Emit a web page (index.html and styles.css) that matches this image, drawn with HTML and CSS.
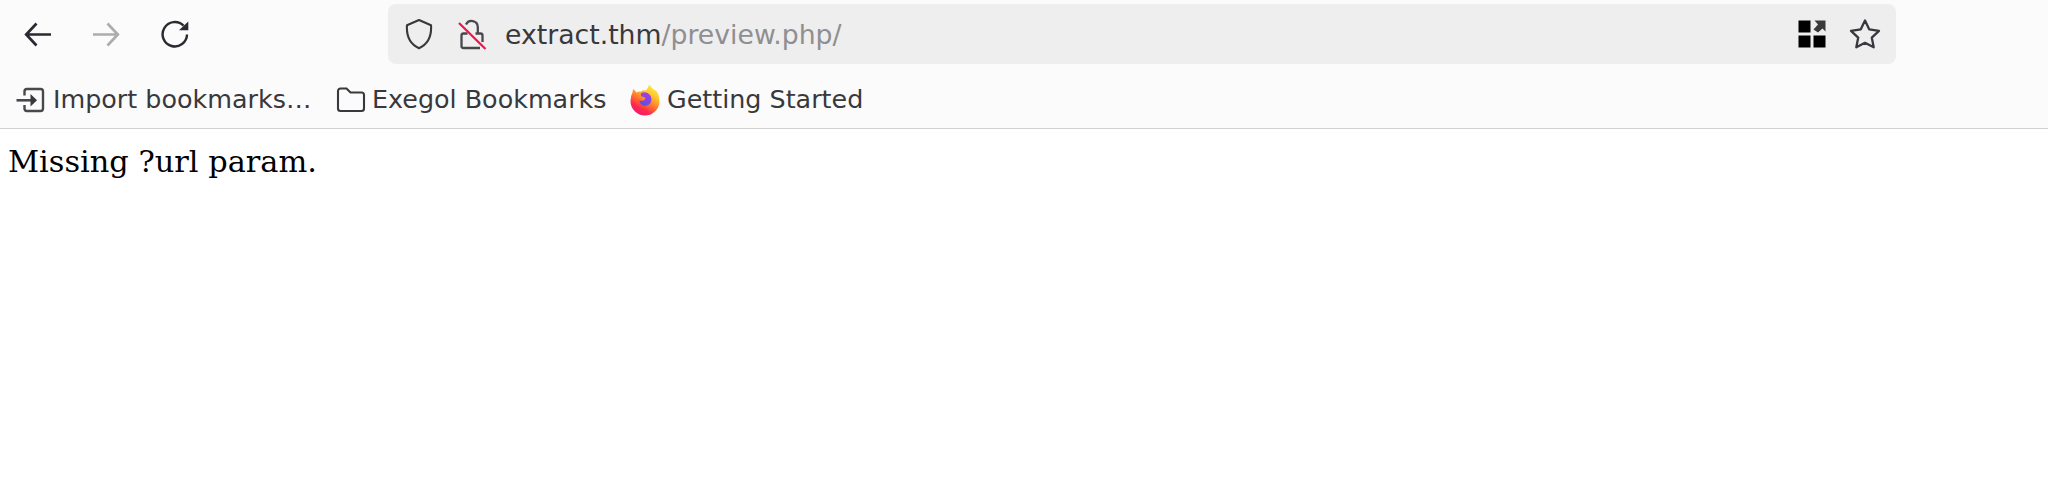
FILE: index.html
```html
<!DOCTYPE html>
<html lang="en">
<head>
    <meta charset="UTF-8">
    <title>extract.thm/preview.php/</title>
    <link rel="stylesheet" href="styles.css">
</head>
<body>
<header class="chrome">
    <!--navigation-->
    <nav class="toolbar">
        <div class="nav_btns">
            <svg class="icon" width="28" height="28" viewBox="0 0 28 28"><path d="M27 14.5H2M12.500 3.5L2.2 14.5L12.500 25.5" stroke="#2b2a33" stroke-width="2.7"/></svg>
            <svg class="icon" width="28" height="28" viewBox="0 0 28 28"><path d="M1 14.5H26M15.500 3.5L25.8 14.5L15.500 25.5" stroke="#adadaf" stroke-width="2.7"/></svg>
            <svg class="icon" width="30" height="28" viewBox="0 0 30 28"><path d="M27 14.5A12.2 12.2 0 1 1 23.5 5.7" stroke="#2b2a33" stroke-width="2.4"/><path d="M28.3 1.5V10.300H19Z" fill="#2b2a33"/></svg>
        </div>
        <div class="urlbar">
            <svg class="icon" width="28" height="32" viewBox="0 0 28 32"><path d="M14 2L26 7.2C26.8 18 23.3 26 14 30.3C4.7 26 1.2 18 2 7.2Z" stroke="#38383d" stroke-width="2.1" stroke-linejoin="round"/></svg>
            <svg class="icon lock" width="30" height="32" viewBox="0 0 30 32">
                <path d="M8 6.5A6.2 6.2 0 0 1 19.8 9V15M9.5 15.5H5.5A2 2 0 0 0 3.5 17.5V28A2 2 0 0 0 5.5 30H22M17.5 15.5H22.5A2 2 0 0 1 24.5 17.5V24" stroke="#48484d" stroke-width="2.3"/>
                <path d="M1 5L27.5 31" stroke="#e9174f" stroke-width="2.3"/>
            </svg>
            <p class="url"><span class="host">extract.thm</span>/preview.php/</p>
            <svg class="icon tiles" width="28" height="28" viewBox="0 0 28 28">
                <path d="M.5 .5h12v12h-12zM.5 15.5h12v12h-12zM15.5 15.5h12v12h-12z" fill="#000"/>
                <path d="M16.500 .5H27.5V11.500L24.5 8.500L20 12.500L15.500 9.500L20 4.500Z" fill="#3a3a3a"/>
            </svg>
            <svg class="icon" width="32" height="32" viewBox="0 0 32 32"><path d="M16 2.5L20.2 11.3L30 12.8L22.8 19.7L24.7 29.3L16 24.8L7.3 29.3L9.2 19.7L2 12.8L11.8 11.3Z" stroke="#38383d" stroke-width="2.3" stroke-linejoin="round"/></svg>
        </div>
    </nav>
    <!--bookmarks-->
    <ul class="bookmarks">
        <li class="import">
            <svg class="icon" width="29" height="26" viewBox="0 0 29 26"><path d="M8.5 8.5V4.5A2.5 2.5 0 0 1 11 2H24.5A2.5 2.5 0 0 1 27 4.5V21.5A2.5 2.5 0 0 1 24.5 24H11A2.5 2.5 0 0 1 8.5 21.5V18" stroke="#48484d" stroke-width="2.4"/><path d="M.5 13.3H17" stroke="#48484d" stroke-width="2.6"/><path d="M14.5 7L21 13.3L14.5 19.5Z" fill="#38383d"/></svg>
            <span>Import bookmarks…</span>
        </li>
        <li class="folder">
            <svg class="icon" width="30" height="26" viewBox="0 0 30 26"><path d="M2 4A2.5 2.5 0 0 1 4.5 1.5H10.5L14.5 5.5H25.5A2.5 2.5 0 0 1 28 8V21.5A2.5 2.5 0 0 1 25.5 24H4.5A2.5 2.5 0 0 1 2 21.5Z" stroke="#38383d" stroke-width="2.1"/></svg>
            <span>Exegol Bookmarks</span>
        </li>
        <li class="started">
            <svg class="icon" width="30" height="32" viewBox="0 0 30 32">
                <defs>
                    <linearGradient id="flame" x1=".85" y1="0" x2=".3" y2="1">
                        <stop offset="0" stop-color="#fff44f"/>
                        <stop offset=".3" stop-color="#ffc72e"/>
                        <stop offset=".55" stop-color="#ff7f2a"/>
                        <stop offset=".8" stop-color="#ff2a4d"/>
                        <stop offset="1" stop-color="#f01578"/>
                    </linearGradient>
                    <linearGradient id="globe" x1=".7" y1="0" x2=".3" y2="1">
                        <stop offset="0" stop-color="#a63bea"/>
                        <stop offset="1" stop-color="#5b54d6"/>
                    </linearGradient>
                </defs>
                <path d="M3.5 5L6.5 8.5Q8.5 7.3 11 7.5Q13 5.5 16 6.5Q18 4 19.2 .5Q21.5 3.5 24 6L26 6.5Q29.5 11 29.5 17A14.5 14.5 0 0 1 .5 17Q.5 12 2.5 8.5Q2.5 6.5 3.5 5Z" fill="url(#flame)"/>
                <path d="M11.5 9Q16.5 7 20 11Q22.5 15 20.500 19Q18 22.5 14 22Q10 21 9.3 16.5Q11.5 17 13.5 16.5Q16 15.5 15 13.5L12 12.5Q10 11 11.5 9Z" fill="url(#globe)"/>
            </svg>
            <span>Getting Started</span>
        </li>
    </ul>
</header>
<main class="page">Missing ?url param.</main>
</body>
</html>
```

FILE: styles.css
```css
body,p,ul,li{margin:0;padding:0;}
body{height:491px;overflow:hidden;background:#fff;}
ul{list-style:none;}

/*browser chrome*/
.chrome{box-sizing:border-box;height:129px;background:#fbfbfb;border-bottom:1px solid #d2d2d4;color:#38383d;font-family:"DejaVu Sans",sans-serif;white-space:nowrap;}
.icon{display:block;flex:none;fill:none;}
.toolbar{display:flex;padding-top:4px;}
.nav_btns{display:flex;align-items:center;gap:40px;width:364px;height:60px;padding-left:24px;}
.urlbar{display:flex;align-items:center;box-sizing:border-box;width:1508px;height:60px;padding:0 15px 0 17px;border-radius:8px;background:#eee;}
.lock{margin-left:25px;}
.url{flex:1;margin-left:17px;padding-top:2px;font-size:26.7px;line-height:58px;color:#8f8f92;}
.host{color:#38383d;}
.tiles{margin-right:23px;}

/*bookmarks bar*/
.bookmarks{display:flex;height:57px;padding:7px 0 0 16px;font-size:25.4px;line-height:57px;}
.bookmarks li{display:flex;align-items:center;}
.import{width:320px;gap:8px;}
.folder{width:294px;gap:6px;}
.started{gap:7px;}

/*page content*/
.page{padding:15px 8px;font:30.4px/36px "DejaVu Serif",serif;color:#000;}
```
